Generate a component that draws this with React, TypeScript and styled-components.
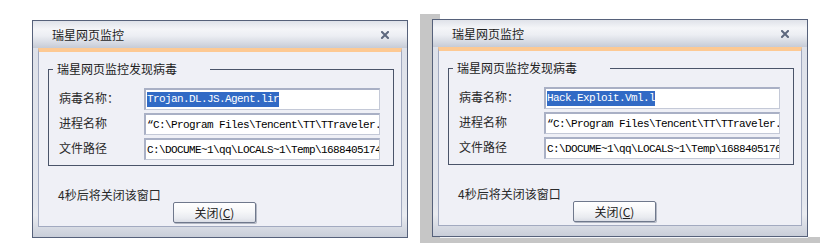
import styled, { createGlobalStyle } from 'styled-components';

const GlobalStyle = createGlobalStyle`
  html, body { margin: 0; padding: 0; background: #ffffff; }
  body { font-family: "Noto Sans CJK SC", "Noto Sans", sans-serif; }
`;

const Page = styled.div`
  display: flex;
  align-items: flex-start;
  width: 820px;
  height: 250px;
`;

const LeftSlot = styled.div`
  margin: 20px 0 0 32px;
`;

// the second capture has a grey strip of the desktop behind it on the left and bottom
const GreyShot = styled.div`
  margin: 14px 0 0 12px;
  padding: 5px 12px 6px 12px;
  background:
    linear-gradient(#fff, #fff) 388px 0 / 12px 223px no-repeat,
    linear-gradient(#fff, #fff) 20px 0 / 380px 5px no-repeat,
    linear-gradient(#f4f5f8, #f4f5f8) 20px 223px / 368px 1px no-repeat,
    #c6c6c6;
`;

const Dialog = styled.div`
  box-sizing: border-box;
  width: 376px;
  height: 218px;
  border: 1px solid #56617a;
  display: flex;
  flex-direction: column;
  background: linear-gradient(to bottom, #dde0e8 0%, #e4e7ee 85%, #e9ebf0 90%, #c9ced9 100%);
`;

const TitleBar = styled.div`
  height: 27px;
  flex: none;
  display: flex;
  align-items: center;
  justify-content: space-between;
  padding: 0 18px 0 19px;
  background: linear-gradient(to bottom, #dfe2e9 0%, #f4f5f8 30%, #eceef3 55%, #d3d7e0 85%, #c6cbd6 100%);
`;

const TitleText = styled.span`
  font-size: 12px;
  line-height: 16px;
  color: #1e1e1e;
  padding-top: 1px;
`;

const CloseIcon = styled.svg`
  display: block;
  width: 8px;
  height: 8px;
`;

const Body = styled.div`
  flex: 1;
  margin: 0 5px 10px 5px;
  border: 1px solid #a2aac0;
  border-top: 4px solid #fdc993;
  background: #eff0f6;
  display: flex;
  flex-direction: column;
  align-items: flex-start;
`;

const GroupBox = styled.fieldset`
  box-sizing: border-box;
  width: 346px;
  margin: 9px 0 0 9px;
  padding: 0;
  border: 1px solid #4a5469;
  min-inline-size: 0;
`;

const Legend = styled.legend`
  margin-left: 4px;
  padding: 0 33px 0 4px;
  font-size: 12px;
  line-height: 16px;
  color: #222;
`;

const Rows = styled.div`
  display: flex;
  flex-direction: column;
  gap: 3px;
  padding: 11px 0 5px 0;
`;

const Row = styled.div`
  display: flex;
  align-items: flex-start;
`;

const Label = styled.span`
  width: 85px;
  padding: 2px 0 0 10px;
  font-size: 12px;
  line-height: 16px;
  color: #2a2a2a;
  white-space: nowrap;
`;

const Field = styled.div`
  box-sizing: border-box;
  width: 236px;
  height: 22px;
  border-style: solid;
  border-width: 2px 1px 1px 2px;
  border-color: #a9b0c5 #c4c9d7 #c4c9d7 #a9b0c5;
  background: #fff;
  overflow: hidden;
  white-space: nowrap;
  display: flex;
  align-items: center;
  padding-left: 1px;
  font-family: "Liberation Mono", "DejaVu Sans Mono", monospace;
  font-size: 11px;
  letter-spacing: -0.6px;
  color: #000;
`;

const Selected = styled.span`
  background: #316ac5;
  color: #fff;
  line-height: 15px;
`;

const Countdown = styled.div`
  margin: 22px 0 0 19px;
  font-size: 12px;
  line-height: 14px;
  color: #2a2a2a;
`;

const Button = styled.button`
  box-sizing: border-box;
  width: 83px;
  height: 21px;
  margin: 0 0 0 134px;
  padding: 0;
  border: 1px solid #6f788c;
  border-radius: 2px;
  background: linear-gradient(to bottom, #ffffff 0%, #f6f7f9 45%, #e9ebf0 80%, #dadde5 100%);
  box-shadow: 1px 1px 0 #b3b8c4;
  font-family: "Noto Sans CJK SC", "Noto Sans", sans-serif;
  font-size: 12px;
  line-height: 16px;
  color: #222;
`;

type Detection = {
  virus: string;
  process: string;
  file: string;
};

const detections: Detection[] = [
  {
    virus: 'Trojan.DL.JS.Agent.lir',
    process: '“C:\\Program Files\\Tencent\\TT\\TTraveler.exe”',
    file: 'C:\\DOCUME~1\\qq\\LOCALS~1\\Temp\\16884051743.htm',
  },
  {
    virus: 'Hack.Exploit.Vml.l',
    process: '“C:\\Program Files\\Tencent\\TT\\TTraveler.exe”',
    file: 'C:\\DOCUME~1\\qq\\LOCALS~1\\Temp\\16884051765.htm',
  },
];

const MonitorDialog = ({ data }: { data: Detection }) => (
  <Dialog>
    <TitleBar>
      <TitleText>瑞星网页监控</TitleText>
      <CloseIcon viewBox="0 0 8 8">
        <path d="M1 1 L7 7 M7 1 L1 7" stroke="#5d687e" strokeWidth="2" strokeLinecap="square" />
      </CloseIcon>
    </TitleBar>
    <Body>
      <GroupBox>
        <Legend>瑞星网页监控发现病毒</Legend>
        <Rows>
          <Row>
            <Label>病毒名称：</Label>
            <Field><Selected>{data.virus}</Selected></Field>
          </Row>
          <Row>
            <Label>进程名称</Label>
            <Field>{data.process}</Field>
          </Row>
          <Row>
            <Label>文件路径</Label>
            <Field>{data.file}</Field>
          </Row>
        </Rows>
      </GroupBox>
      <Countdown>4秒后将关闭该窗口</Countdown>
      <Button>关闭(<u>C</u>)</Button>
    </Body>
  </Dialog>
);

export default function App() {
  return (
    <Page>
      <GlobalStyle />
      <LeftSlot>
        <MonitorDialog data={detections[0]} />
      </LeftSlot>
      <GreyShot>
        <MonitorDialog data={detections[1]} />
      </GreyShot>
    </Page>
  );
}
